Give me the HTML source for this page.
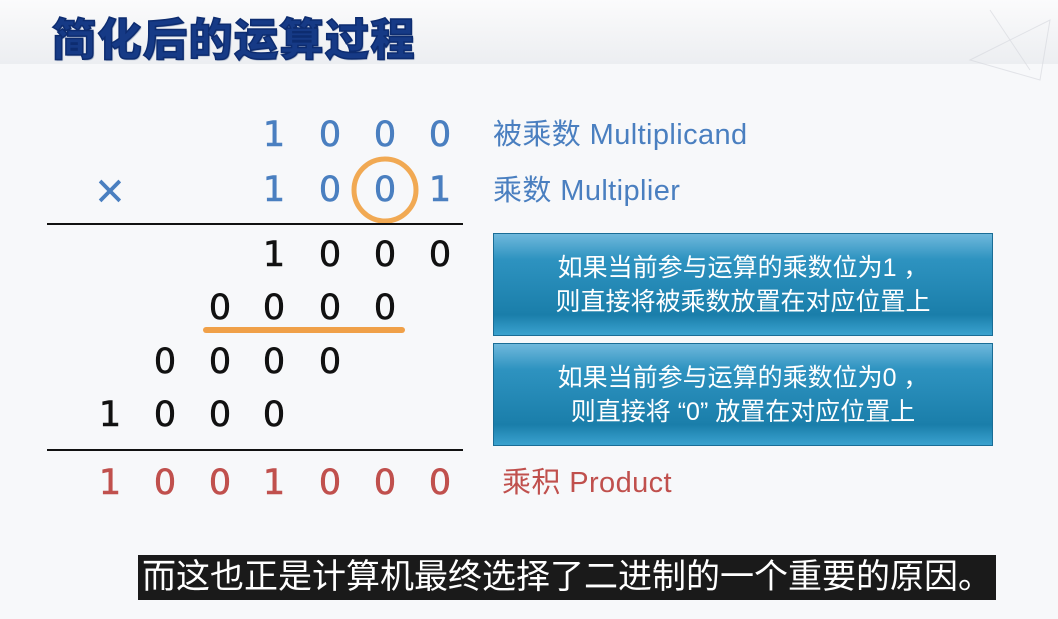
<!DOCTYPE html>
<html><head><meta charset="utf-8"><style>
body{margin:0;width:1058px;height:619px;overflow:hidden;background:#f7f8fa;position:relative;font-family:"Liberation Sans","Noto Sans CJK SC",sans-serif}
.hdr{position:absolute;left:0;top:0;width:1058px;height:64px;background:linear-gradient(#fbfbfc,#eceef1)}
.title{position:absolute;left:52px;top:4px;font-size:44px;font-weight:900;color:#163a86;letter-spacing:1.5px;-webkit-text-stroke:1.5px #0d2c70;text-shadow:1px 1px 1px #7a8aa8;white-space:nowrap}
.d{position:absolute;font-family:"DejaVu Sans",sans-serif;font-size:35px;width:30px;text-align:center;line-height:40px;-webkit-text-stroke:0.6px currentColor}
.b{color:#4a7fc0}.k{color:#111}.r{color:#c0504d}
.line{position:absolute;left:47px;width:416px;height:2px;background:#111}
.lab{position:absolute;left:493px;font-size:29px;line-height:34px;white-space:nowrap;letter-spacing:0.4px}
.box{position:absolute;left:493px;width:500px;height:103px;background:linear-gradient(#6fb8dc 0%,#2e93c0 25%,#1a7eaa 80%,#3aa2cf 100%);border:1px solid #1a6d96;color:#fff;font-size:25px;text-align:center;line-height:34px;box-sizing:border-box;padding-top:17px;white-space:nowrap}
.sub{position:absolute;left:138px;top:555px;width:858px;height:45px;background:#1a1a1a;color:#fff;font-size:34px;line-height:45px;text-align:center;white-space:nowrap}
</style></head><body>
<div class="hdr"></div>
<div class="title">简化后的运算过程</div>
<svg style="position:absolute;left:930px;top:0" width="128" height="90"><g stroke="#d4d6dc" fill="none" opacity=".6"><path d="M40 60 L120 20 L110 80 Z M60 10 L100 70"/></g></svg>

<div class="d b" style="left:259px;top:115px">1</div><div class="d b" style="left:315px;top:115px">0</div><div class="d b" style="left:370px;top:115px">0</div><div class="d b" style="left:425px;top:115px">0</div>
<div class="d b" style="left:94px;top:170px;font-size:38px">×</div>
<div class="d b" style="left:259px;top:170px">1</div><div class="d b" style="left:315px;top:170px">0</div><div class="d b" style="left:370px;top:170px">0</div><div class="d b" style="left:425px;top:170px">1</div>
<svg style="position:absolute;left:345px;top:150px" width="80" height="80"><circle cx="40" cy="40" r="31" fill="none" stroke="#f0a040" stroke-width="5" opacity=".9"/></svg>
<div class="line" style="top:223px"></div>
<div class="d k" style="left:259px;top:235px">1</div><div class="d k" style="left:315px;top:235px">0</div><div class="d k" style="left:370px;top:235px">0</div><div class="d k" style="left:425px;top:235px">0</div>
<div class="d k" style="left:205px;top:288px">0</div><div class="d k" style="left:259px;top:288px">0</div><div class="d k" style="left:315px;top:288px">0</div><div class="d k" style="left:370px;top:288px">0</div>
<div style="position:absolute;left:203px;top:327px;width:202px;height:6px;border-radius:3px;background:#f0a048"></div>
<div class="d k" style="left:150px;top:342px">0</div><div class="d k" style="left:205px;top:342px">0</div><div class="d k" style="left:259px;top:342px">0</div><div class="d k" style="left:315px;top:342px">0</div>
<div class="d k" style="left:95px;top:395px">1</div><div class="d k" style="left:150px;top:395px">0</div><div class="d k" style="left:205px;top:395px">0</div><div class="d k" style="left:259px;top:395px">0</div>
<div class="line" style="top:449px"></div>
<div class="d r" style="left:95px;top:463px">1</div><div class="d r" style="left:150px;top:463px">0</div><div class="d r" style="left:205px;top:463px">0</div><div class="d r" style="left:259px;top:463px">1</div><div class="d r" style="left:315px;top:463px">0</div><div class="d r" style="left:370px;top:463px">0</div><div class="d r" style="left:425px;top:463px">0</div>

<div class="lab" style="top:118px;color:#4a7fc0">被乘数 Multiplicand</div>
<div class="lab" style="top:174px;color:#4a7fc0">乘数 Multiplier</div>
<div class="lab" style="top:466px;color:#c0504d;left:502px">乘积 Product</div>

<div class="box" style="top:233px">如果当前参与运算的乘数位为1 ，<br>则直接将被乘数放置在对应位置上</div>
<div class="box" style="top:343px">如果当前参与运算的乘数位为0 ，<br>则直接将 “0” 放置在对应位置上</div>
<div class="sub">而这也正是计算机最终选择了二进制的一个重要的原因。</div>
</body></html>
